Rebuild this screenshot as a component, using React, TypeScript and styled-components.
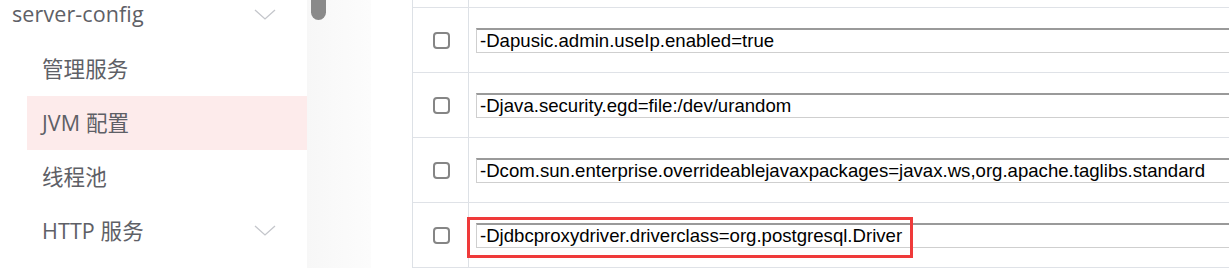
import React from "react";
import styled, { createGlobalStyle } from "styled-components";

const Global = createGlobalStyle`
  html, body { margin: 0; padding: 0; background: #fff; overflow: hidden; }
  body { width: 1229px; height: 268px; }
`;

const Page = styled.div`
  display: flex;
  width: 1229px;
  height: 268px;
  overflow: hidden;
  background: #fff;
`;

const Sidebar = styled.nav`
  width: 307px;
  flex: none;
  background: #fff;
  font-family: "Open Sans", "Noto Sans CJK SC", sans-serif;
  color: #5e6066;
`;

const Menu = styled.ul`
  list-style: none;
  margin: -12px 0 0;
  padding: 0;
`;

const MenuItem = styled.li<{ $level: number; $active?: boolean }>`
  display: flex;
  align-items: center;
  justify-content: space-between;
  height: 54px;
  margin-left: ${(p) => (p.$level === 0 ? 0 : 27)}px;
  padding-left: ${(p) => (p.$level === 0 ? 12 : 15)}px;
  padding-right: 31px;
  font-size: 21.5px;
  letter-spacing: 0.1px;
  background: ${(p) => (p.$active ? "#fdebeb" : "transparent")};
`;

const Label = styled.span`
  position: relative;
  top: -2px;
`;

const Chevron = styled.svg`
  width: 22px;
  height: 12px;
  flex: none;
`;

const Gutter = styled.div`
  position: relative;
  width: 64px;
  flex: none;
  background: linear-gradient(to right, #f7f7f7, #fcfcfc);
`;

const Thumb = styled.div`
  position: absolute;
  left: 4px;
  top: -10px;
  width: 15px;
  height: 30px;
  border-radius: 8px;
  background: #8a8a8a;
`;

const Content = styled.main`
  flex: 1;
  padding-left: 41px;
  min-width: 0;
`;

const Table = styled.div`
  border-left: 1px solid #dde1e6;
  width: 900px;
  font-family: "Liberation Sans", Arial, sans-serif;
`;

const Row = styled.div<{ $h: number }>`
  display: grid;
  grid-template-columns: 55px 1fr;
  height: ${(p) => p.$h}px;
  border-bottom: 1px solid #dfe2e7;
`;

const Cell = styled.div`
  position: relative;
  display: flex;
  align-items: center;
  & + & {
    border-left: 1px solid #dde1e6;
    padding-left: 7px;
  }
  &:first-child {
    justify-content: center;
    padding-left: 2px;
  }
`;

const Check = styled.span`
  width: 13px;
  height: 13px;
  border: 2px solid #858585;
  border-radius: 4px;
  background: #fff;
  margin-top: 1px;
`;

const Input = styled.input`
  width: 800px;
  height: 25px;
  box-sizing: border-box;
  margin: 1px 0 0;
  padding: 0 3px;
  border: 1px solid #cfcfcf;
  border-top: 2px solid #9a9a9a;
  font-family: "Liberation Sans", Arial, sans-serif;
  font-size: 18.6px;
  color: #000;
  background: #fff;
  outline: none;
`;

const Highlight = styled.div`
  position: absolute;
  left: -2px;
  top: 14px;
  width: 446px;
  height: 41px;
  box-sizing: border-box;
  border: 3px solid #ef3a3a;
  pointer-events: none;
`;

const BottomBand = styled.div`
  height: 4px;
  background: #f1f2f4;
`;

const ChevronIcon = () => (
  <Chevron viewBox="0 0 22 12">
    <path d="M1 1 L11 10 L21 1" fill="none" stroke="#c4c6cb" strokeWidth="1.3" />
  </Chevron>
);

const rows = [
  "-Dapusic.admin.useIp.enabled=true",
  "-Djava.security.egd=file:/dev/urandom",
  "-Dcom.sun.enterprise.overrideablejavaxpackages=javax.ws,org.apache.taglibs.standard",
  "-Djdbcproxydriver.driverclass=org.postgresql.Driver",
];

export default function App() {
  return (
    <>
      <Global />
      <Page>
        <Sidebar>
          <Menu>
            <MenuItem $level={0}>
              <Label>server-config</Label>
              <ChevronIcon />
            </MenuItem>
            <MenuItem $level={1}>
              <Label>管理服务</Label>
            </MenuItem>
            <MenuItem $level={1} $active>
              <Label>JVM 配置</Label>
            </MenuItem>
            <MenuItem $level={1}>
              <Label>线程池</Label>
            </MenuItem>
            <MenuItem $level={1}>
              <Label>HTTP 服务</Label>
              <ChevronIcon />
            </MenuItem>
          </Menu>
        </Sidebar>
        <Gutter>
          <Thumb />
        </Gutter>
        <Content>
          <Table>
            <Row $h={7}>
              <Cell />
              <Cell />
            </Row>
            {rows.map((v, i) => (
              <Row $h={64} key={v}>
                <Cell>
                  <Check />
                </Cell>
                <Cell>
                  <Input defaultValue={v} readOnly />
                  {i === 3 && <Highlight />}
                </Cell>
              </Row>
            ))}
          </Table>
          <BottomBand />
        </Content>
      </Page>
    </>
  );
}
